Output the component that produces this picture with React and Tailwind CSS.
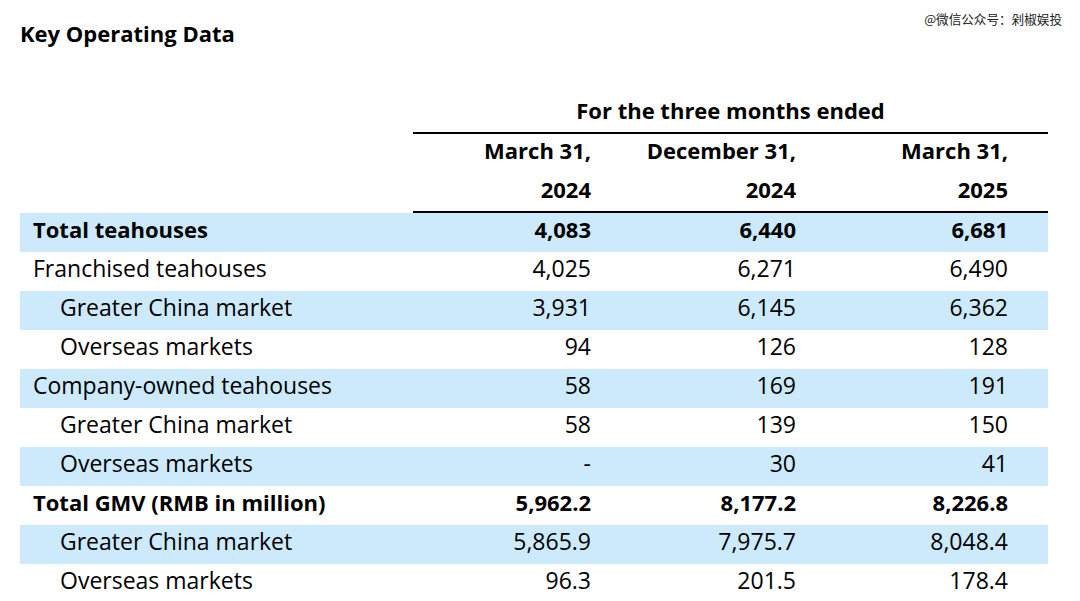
const rows = [
  { label: 'Total teahouses', values: ['4,083', '6,440', '6,681'], bold: true, blue: true },
  { label: 'Franchised teahouses', values: ['4,025', '6,271', '6,490'] },
  { label: 'Greater China market', values: ['3,931', '6,145', '6,362'], indent: true, blue: true },
  { label: 'Overseas markets', values: ['94', '126', '128'], indent: true },
  { label: 'Company-owned teahouses', values: ['58', '169', '191'], blue: true },
  { label: 'Greater China market', values: ['58', '139', '150'], indent: true },
  { label: 'Overseas markets', values: ['-', '30', '41'], indent: true, blue: true },
  { label: 'Total GMV (RMB in million)', values: ['5,962.2', '8,177.2', '8,226.8'], bold: true },
  { label: 'Greater China market', values: ['5,865.9', '7,975.7', '8,048.4'], indent: true, blue: true },
  { label: 'Overseas markets', values: ['96.3', '201.5', '178.4'], indent: true },
];

const cols = ['w-[178px]', 'w-[205px]', 'w-[212px]'];

export default function App() {
  return (
    <div className="w-[1080px] h-[601px] overflow-hidden bg-white text-black font-['Open_Sans',sans-serif] relative">
      <div className="absolute right-[18px] top-[11px] text-[12.6px] leading-4 text-[#222] font-['Noto_Sans_CJK_SC',sans-serif]">
        @微信公众号：剁椒娱投
      </div>
      <h1 className="pl-[20px] pt-[19px] h-[60px] text-[22px] leading-7 font-bold">Key Operating Data</h1>
      <div className="pl-[20px] pt-[33px]">
        <div className="ml-[393px] w-[635px]">
          <div className="h-[39px] flex items-center justify-center text-[22px] font-bold pb-[4px]">For the three months ended</div>
          <div className="border-t-2 border-black" />
          <div className="flex h-[38px] items-center text-[22px] font-bold pb-[6px]">
            <div className={cols[0] + ' text-right'}>March 31,</div>
            <div className={cols[1] + ' text-right'}>December 31,</div>
            <div className={cols[2] + ' text-right'}>March 31,</div>
          </div>
          <div className="flex h-[39px] items-center text-[22px] font-bold pb-[5px]">
            <div className={cols[0] + ' text-right'}>2024</div>
            <div className={cols[1] + ' text-right'}>2024</div>
            <div className={cols[2] + ' text-right'}>2025</div>
          </div>
          <div className="border-t-2 border-black" />
        </div>
        <div className="w-[1028px]">
          {rows.map((r, i) => (
            <div
              key={i}
              className={
                'flex h-[39px] items-center pb-[6px] ' +
                (r.blue ? 'bg-[#cceafb] ' : '') +
                (r.bold ? 'font-bold text-[22px]' : 'text-[23px]')
              }
            >
              <div className={'w-[393px] ' + (r.indent ? 'pl-[40px]' : 'pl-[13px]')}>{r.label}</div>
              {r.values.map((v, j) => (
                <div key={j} className={cols[j] + ' text-right'}>{v}</div>
              ))}
            </div>
          ))}
        </div>
      </div>
    </div>
  );
}
